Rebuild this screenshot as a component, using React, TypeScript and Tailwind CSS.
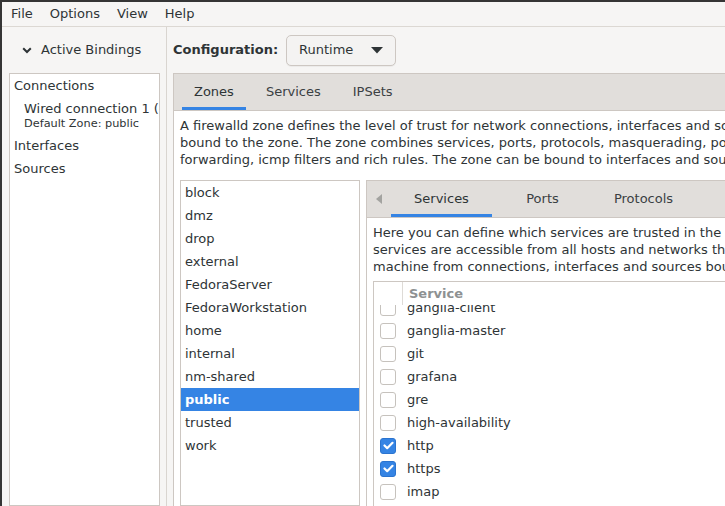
import React from 'react'

const zones = ['block', 'dmz', 'drop', 'external', 'FedoraServer', 'FedoraWorkstation', 'home', 'internal', 'nm-shared', 'public', 'trusted', 'work']

const services: [string, boolean][] = [
  ['ganglia-client', false],
  ['ganglia-master', false],
  ['git', false],
  ['grafana', false],
  ['gre', false],
  ['high-availability', false],
  ['http', true],
  ['https', true],
  ['imap', false],
  ['imaps', false],
]

function Check({ on }: { on: boolean }) {
  if (on)
    return (
      <div className="w-4 h-4 rounded-[3px] bg-[#3584e4] border border-[#2b74cf] flex items-center justify-center">
        <svg width="11" height="9" viewBox="0 0 11 9">
          <path d="M1.5 4.5 L4.2 7.2 L9.5 1.8" fill="none" stroke="white" strokeWidth="2.2" strokeLinecap="round" strokeLinejoin="round" />
        </svg>
      </div>
    )
  return <div className="w-4 h-4 rounded-[3px] bg-white border border-[#c6c2bd]" />
}

function Tab({ label, active }: { label: string; active?: boolean }) {
  return (
    <div className={`relative flex items-center px-3 ${active ? 'text-[#2e3436]' : 'text-[#3b4043]'}`}>
      {label}
      {active && <div className="absolute left-0 right-0 bottom-0 h-[3px] bg-[#3584e4]" />}
    </div>
  )
}

export default function App() {
  return (
    <div className="w-[725px] h-[506px] overflow-hidden flex flex-col bg-[#f6f5f4] border-l-2 border-t-2 border-[#353535] text-[13px] text-[#2e3436] font-['DejaVu_Sans',sans-serif]">
      {/* menu bar */}
      <div className="h-[25px] shrink-0 flex items-center gap-[17px] pl-[9px] border-b border-[#dcd8d3]">
        <span>File</span>
        <span>Options</span>
        <span>View</span>
        <span>Help</span>
      </div>

      <div className="flex-1 min-h-0 flex">
        {/* left pane */}
        <div className="w-[164px] shrink-0 flex flex-col pl-[7px] pr-[6px]">
          <div className="h-[46px] shrink-0 flex items-center pl-[13px] gap-[9px]">
            <svg width="10" height="7" viewBox="0 0 10 7">
              <path d="M1.2 1.2 L5 5 L8.8 1.2" fill="none" stroke="#2e3436" strokeWidth="2" />
            </svg>
            <span>Active Bindings</span>
          </div>
          <div className="flex-1 bg-white border border-[#cdc7c2] overflow-hidden whitespace-nowrap">
            <div className="h-[23px] leading-[23px] pl-[4px]">Connections</div>
            <div className="pl-[14px] pt-[3px] pb-[3px]">
              <div className="leading-[17px]">Wired connection 1 (enp1s0)</div>
              <div className="leading-[14px] text-[11.3px]">Default Zone: public</div>
            </div>
            <div className="h-[23px] leading-[23px] pl-[4px]">Interfaces</div>
            <div className="h-[23px] leading-[23px] pl-[4px]">Sources</div>
          </div>
        </div>

        <div className="w-px shrink-0 bg-[#d9d5d0]" />

        {/* right pane, wider than the window and clipped */}
        <div className="w-[720px] shrink-0 flex flex-col pl-[6px]">
          <div className="h-[46px] shrink-0 flex items-center">
            <span className="w-[113px] font-bold">Configuration:</span>
            <div className="h-[31px] w-[110px] flex items-center justify-between pl-[12px] pr-[12px] rounded-[5px] border border-[#cdc7c2] bg-[#f4f3f2] shadow-[0_1px_0_rgba(0,0,0,0.04)]">
              <span>Runtime</span>
              <svg width="12" height="7" viewBox="0 0 12 7">
                <path d="M0 0 H12 L6 6.5 Z" fill="#2e3436" />
              </svg>
            </div>
          </div>

          {/* outer notebook */}
          <div className="flex-1 min-h-0 flex flex-col border-l border-t border-[#cdc7c2]">
            <div className="h-[37px] shrink-0 flex pl-[8px] gap-[8px] bg-[#e1dedb] border-b border-[#cdc7c2]">
              <Tab label="Zones" active />
              <Tab label="Services" />
              <Tab label="IPSets" />
            </div>
            <div className="flex-1 min-h-0 flex flex-col bg-white px-[6px] pt-[6px]">
              <div className="leading-[17px] whitespace-nowrap">
                <div>A firewalld zone defines the level of trust for network connections, interfaces and source addresses</div>
                <div>bound to the zone. The zone combines services, ports, protocols, masquerading, port/packet</div>
                <div>forwarding, icmp filters and rich rules. The zone can be bound to interfaces and source addresses.</div>
              </div>

              <div className="flex-1 min-h-0 flex gap-[6px] mt-[12px]">
                {/* zone list */}
                <div className="w-[180px] shrink-0 border border-[#cdc7c2] bg-white">
                  {zones.map(z => (
                    <div
                      key={z}
                      className={`h-[23px] leading-[23px] pl-[4px] ${z === 'public' ? 'bg-[#3584e4] text-white font-bold' : ''}`}
                    >
                      {z}
                    </div>
                  ))}
                </div>

                {/* inner notebook */}
                <div className="flex-1 min-w-0 flex flex-col border-l border-t border-[#cdc7c2]">
                  <div className="h-[37px] shrink-0 flex bg-[#e1dedb] border-b border-[#cdc7c2] whitespace-nowrap">
                    <div className="w-[24px] shrink-0 flex items-center pl-[9px]">
                      <svg width="6" height="10" viewBox="0 0 6 10">
                        <path d="M6 0 V10 L0 5 Z" fill="#a3a3a0" />
                      </svg>
                    </div>
                    <div className="relative w-[101px] shrink-0 flex items-center justify-center">
                      Services
                      <div className="absolute left-0 right-0 bottom-0 h-[3px] bg-[#3584e4]" />
                    </div>
                    <div className="w-[101px] shrink-0 flex items-center justify-center text-[#3b4043]">Ports</div>
                    <div className="w-[101px] shrink-0 flex items-center justify-center text-[#3b4043]">Protocols</div>
                  </div>
                  <div className="flex-1 min-h-0 flex flex-col bg-white px-[6px] pt-[6px]">
                    <div className="leading-[17px] whitespace-nowrap">
                      <div>Here you can define which services are trusted in the zone. Trusted</div>
                      <div>services are accessible from all hosts and networks that can reach the</div>
                      <div>machine from connections, interfaces and sources bound to this zone.</div>
                    </div>

                    {/* service tree */}
                    <div className="flex-1 min-h-0 mt-[6px] flex flex-col border-l border-t border-[#cdc7c2]">
                      <div className="h-[23px] shrink-0 flex">
                        <div className="w-[29px] shrink-0 border-r border-[#dedbd7]" />
                        <div className="pl-[6px] flex items-center font-bold text-[#8e9192]">Service</div>
                      </div>
                      <div className="flex-1 min-h-0 overflow-hidden">
                        <div className="-mt-[9px]">
                          {services.map(([name, on]) => (
                            <div key={name} className="h-[23px] flex items-center pl-[6px] gap-[11px]">
                              <Check on={on} />
                              <span>{name}</span>
                            </div>
                          ))}
                        </div>
                      </div>
                    </div>
                  </div>
                </div>
              </div>
            </div>
          </div>
        </div>
      </div>
    </div>
  )
}
